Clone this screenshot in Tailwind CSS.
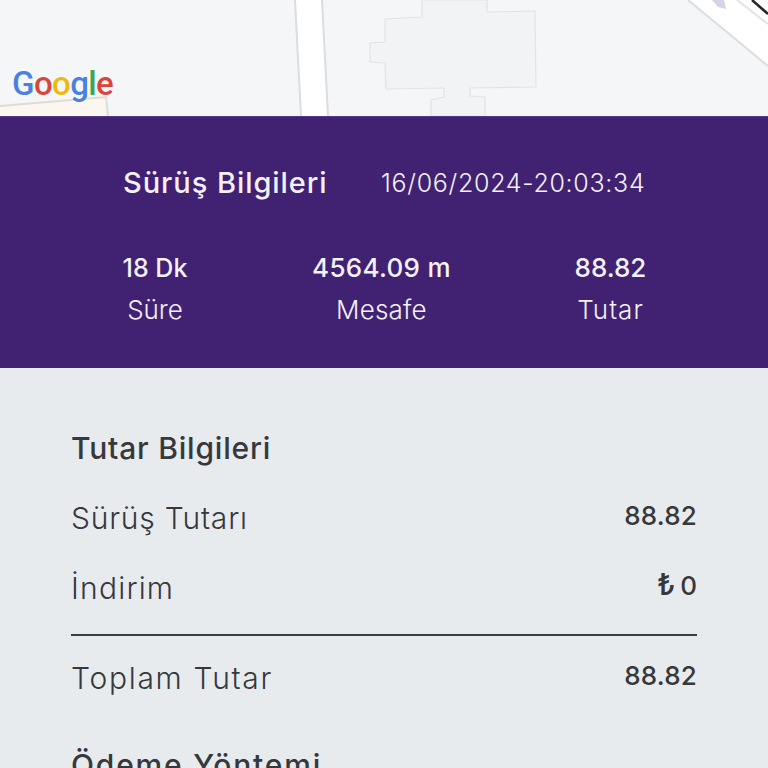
<!DOCTYPE html>
<html lang="en">
<head>
    <meta charset="UTF-8">
    <meta name="viewport" content="width=device-width, initial-scale=1.0">
    <title>Sürüş Bilgileri</title>
    <script src="https://cdn.jsdelivr.net/npm/@tailwindcss/browser@4"></script>
</head>
<body class="font-['Inter',sans-serif] bg-[#e8ebee] overflow-hidden">
    <div class="w-[768px] h-[768px] flex flex-col overflow-hidden">
        <!-- Map -->
        <div class="relative h-[116px] bg-[#f5f6f8] overflow-hidden shrink-0">
            <svg class="absolute inset-0" width="768" height="116" viewBox="0 0 768 116" fill="none">
                <!-- vertical road -->
                <path d="M295 0 L301 116 L328 116 L322 0 Z" fill="#ffffff"/>
                <path d="M295 0 L301 116 M322 0 L328 116" stroke="#dcdde0" stroke-width="2"/>
                <!-- building -->
                <path d="M422 0 L422 17 L385 19 L385 42 L370 43 L370 62 L385 63 L386 89 L444 88 L444 97 L431 100 L431 116 L485 116 L485 97 L470 96 L470 88 L536 87 L535 11 L487 12 L487 0 Z" fill="#f2f3f5" stroke="#e2e3e6" stroke-width="1.2"/>
                <!-- diagonal road -->
                <path d="M688 0 L768 66 L768 0 Z" fill="#ffffff"/>
                <path d="M688 0 L768 66" stroke="#dcdde0" stroke-width="2"/>
                <path d="M737 0 L768 24" stroke="#e2e3e6" stroke-width="2"/>
                <path d="M752 0 L768 14" stroke="#26262a" stroke-width="2.5"/>
                <path d="M712 0 L724 0 L726 9 L718 7 Z" fill="#d5d4e6"/>
                <!-- beige block bottom left -->
                <path d="M0 106 L106 97 L108 116 L0 116 Z" fill="#fbf6ef"/>
                <path d="M0 106 L106 97 L108 116" stroke="#dfdcd8" stroke-width="2"/>
            </svg>
            <div class="absolute left-[12px] top-[63px] font-['Roboto',sans-serif] font-medium text-[33px] leading-[42px] tracking-[-0.6px] [text-shadow:0_0_2px_#fff]"><span class="text-[#4a80e0]">G</span><span class="text-[#d8453c]">o</span><span class="text-[#eeb90f]">o</span><span class="text-[#4a80e0]">g</span><span class="text-[#3ba456]">l</span><span class="text-[#d8453c]">e</span></div>
        </div>

        <!-- Ride info -->
        <div class="h-[252px] bg-[#412172] text-[#f4f1f8] shrink-0 border-t border-[#56398a]">
            <div class="flex items-center pl-[123px] pt-[47px] h-[84px]">
                <h1 class="w-[258px] text-[29px] leading-[38px] font-medium tracking-[0.95px] whitespace-nowrap">Sürüş Bilgileri</h1>
                <span class="text-[25px] leading-[38px] font-light tracking-[0.7px] whitespace-nowrap">16/06/2024-20:03:34</span>
            </div>
            <div class="grid grid-cols-[310px_143px_315px] mt-[50px] text-center">
                <div>
                    <p class="text-[25px] leading-[34px] font-medium">18 Dk</p>
                    <p class="text-[26px] leading-[34px] mt-[8px] font-light">Süre</p>
                </div>
                <div>
                    <p class="text-[26px] leading-[34px] font-medium whitespace-nowrap tracking-[0.3px]">4564.09 m</p>
                    <p class="text-[26px] leading-[34px] mt-[8px] font-light tracking-[0.2px]">Mesafe</p>
                </div>
                <div>
                    <p class="text-[26px] leading-[34px] font-medium">88.82</p>
                    <p class="text-[26px] leading-[34px] mt-[8px] font-light tracking-[1px]">Tutar</p>
                </div>
            </div>
        </div>

        <!-- Amounts -->
        <div class="flex-1 px-[71px] text-[#36383c]">
            <h2 class="mt-[61px] text-[30px] leading-[38px] font-medium tracking-[0.8px] whitespace-nowrap">Tutar Bilgileri</h2>
            <div class="flex justify-between mt-[32px] h-[38px]">
                <span class="text-[30px] leading-[38px] font-light tracking-[0.8px]">Sürüş Tutarı</span>
                <span class="text-[26px] leading-[34px] font-[450] tracking-[0.2px]">88.82</span>
            </div>
            <div class="flex justify-between mt-[32px] h-[38px]">
                <span class="text-[30px] leading-[38px] font-light tracking-[1.2px]">İndirim</span>
                <span class="text-[26px] leading-[34px] font-[450]"><span class="mr-[5px] text-[30px] leading-[30px]">₺</span>0</span>
            </div>
            <div class="mt-[27px] border-t-2 border-[#3a3c40]"></div>
            <div class="flex justify-between mt-[23px] h-[38px]">
                <span class="text-[30px] leading-[38px] font-light tracking-[1.7px]">Toplam Tutar</span>
                <span class="text-[26px] leading-[34px] font-[450] tracking-[0.2px]">88.82</span>
            </div>
            <h2 class="mt-[49px] text-[30px] leading-[38px] font-medium tracking-[1.8px] whitespace-nowrap">Ödeme Yöntemi</h2>
        </div>
    </div>
</body>
</html>
